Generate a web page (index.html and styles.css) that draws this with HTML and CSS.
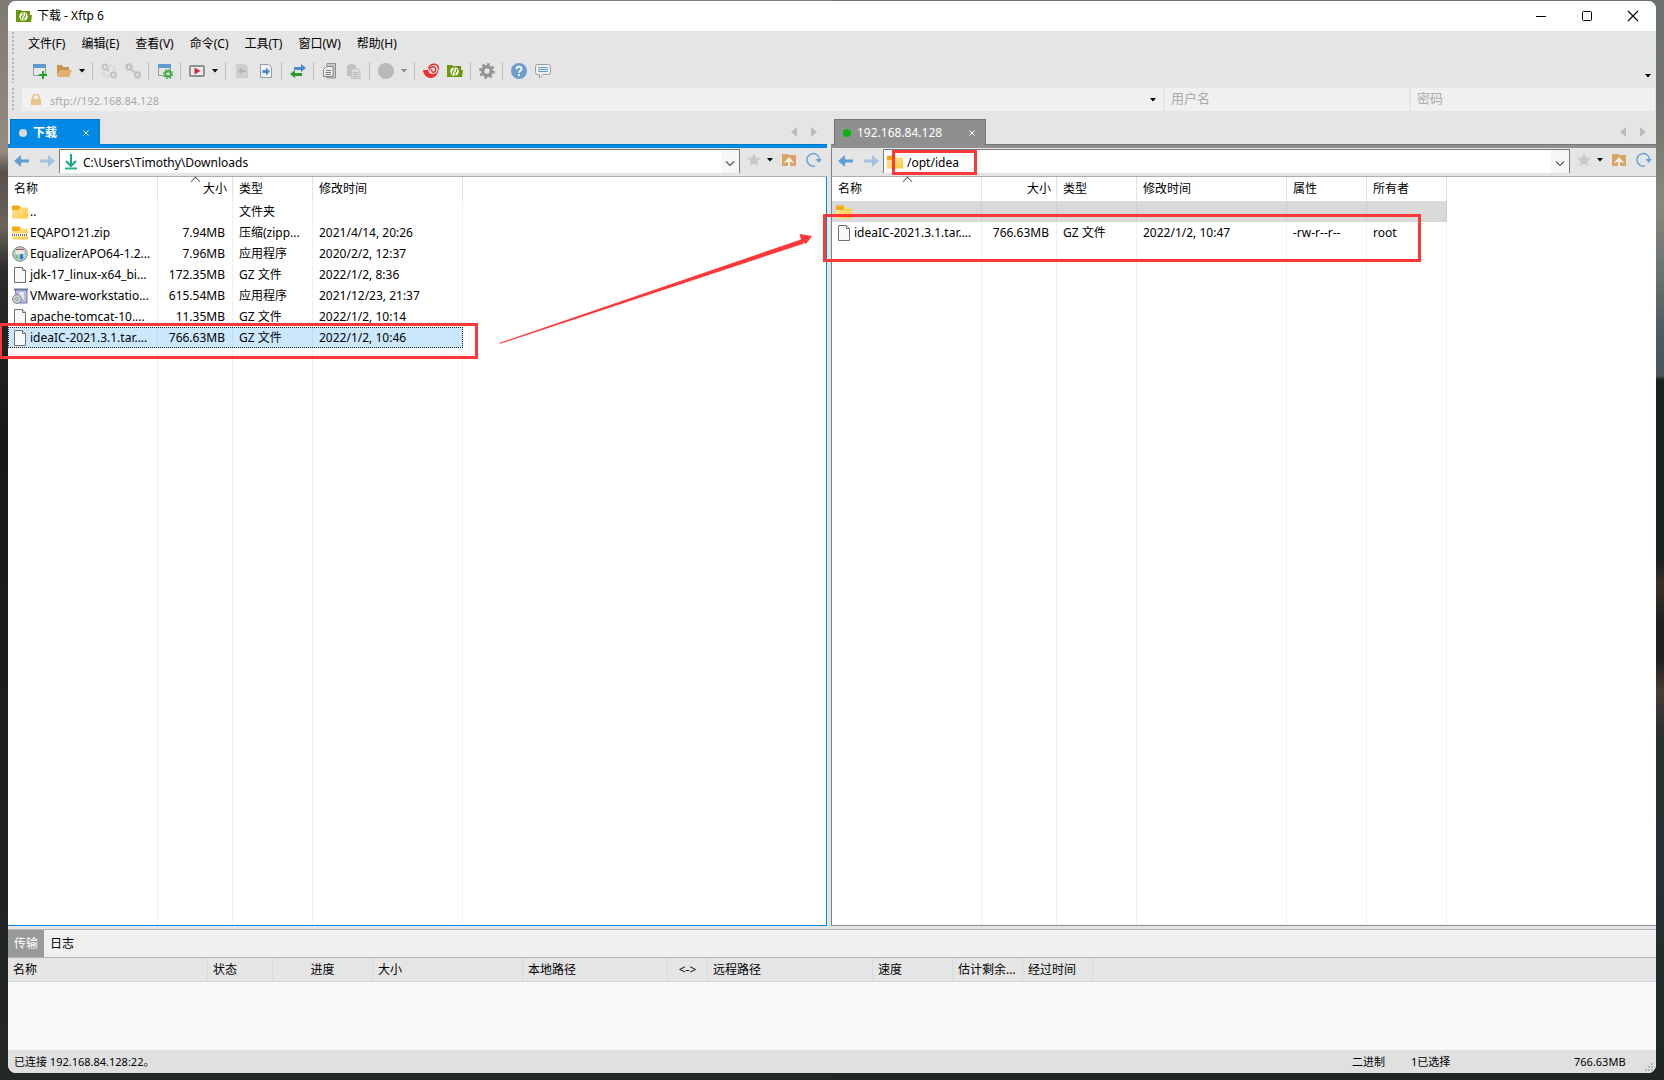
FILE: index.html
```html
<!DOCTYPE html>
<html lang="zh-CN">
<head>
<meta charset="utf-8">
<title>下载 - Xftp 6</title>
<link rel="stylesheet" href="styles.css">
</head>
<body>
<svg class="sprite" aria-hidden="true">
  <defs>
    <linearGradient id="fold" x1="0" y1="0" x2="1" y2="1"><stop offset="0" stop-color="#ffe69a"/><stop offset="1" stop-color="#ffc83c"/></linearGradient>
    <symbol id="i-xftp" viewBox="0 0 16 16"><path d="M0 2h5l1 1h8v4h2l-1 7H0z" fill="#6a9a0c"/><circle cx="7.500" cy="8.500" r="4.200" fill="#fff"/><path d="M7 3.500v4.500H5.500M8 13.500V9h1.500M5.500 8v3M9.500 9V6" fill="none" stroke="#6a9a0c"/></symbol>
    <symbol id="i-new" viewBox="0 0 16 16"><path d="M1.500 2.500h12v10h-12z" fill="#e9e9e9" stroke="#8f9aa3"/><path d="M1 1h13v4H1z" fill="#5c9bd1"/><path d="M11 8v8M7 12h8" stroke="#1ea51e" stroke-width="2"/></symbol>
    <symbol id="i-open" viewBox="0 0 16 16"><path d="M1 2h5l1 2h6v3H4l-3 6z" fill="#c99452"/><path d="M4 7h12l-3 7H1z" fill="#e0b06c"/></symbol>
    <symbol id="i-unlink" viewBox="0 0 16 16"><g fill="none" stroke="#c3c3c3" stroke-width="2"><circle cx="4" cy="4" r="2.500"/><circle cx="12.500" cy="12" r="2.500"/><path d="M6 6l2 2M9 10l2 1"/></g><path d="M10 1l-1 3M14 3l-3 2M15 7h-3M1 10h3M2 14l3-2M7 15v-3" stroke="#c8c8c8"/></symbol>
    <symbol id="i-link" viewBox="0 0 16 16"><g fill="none" stroke="#c3c3c3" stroke-width="2.400"><circle cx="4" cy="4" r="2.500"/><circle cx="12.500" cy="12" r="2.500"/><path d="M6 6l5 5"/></g></symbol>
    <symbol id="i-props" viewBox="0 0 16 16"><path d="M1.500 2.500h12v10h-12z" fill="#e4e4e4" stroke="#8f9aa3"/><path d="M1 1h13v4H1z" fill="#5c9bd1"/><circle cx="11" cy="11" r="2.800" fill="none" stroke="#3fae3f" stroke-width="2"/><circle cx="11" cy="11" r="4.400" fill="none" stroke="#3fae3f" stroke-width="1.400" stroke-dasharray="1.700 1.750"/></symbol>
    <symbol id="i-play" viewBox="0 0 16 16"><rect x="1" y="3" width="14" height="10" rx="1" fill="#ececec" stroke="#8c9296" stroke-width="2"/><path d="M5.500 4.500L11.500 8l-6 3.500z" fill="#e0283c"/></symbol>
    <symbol id="i-docl" viewBox="0 0 16 16"><path d="M2 1h9l3 3v11H2z" fill="#cfcfcf"/><path d="M4 8l4-3.500V7h4v2H8v2.500z" fill="#b4b4b4"/></symbol>
    <symbol id="i-docr" viewBox="0 0 16 16"><path d="M2.500 1.500h8l3 3v10h-11z" fill="#f3f3f3" stroke="#8f9aa3"/><path d="M12 8.500L8 4.500V7H4.500v3H8v2.500z" fill="#4a8ccc"/></symbol>
    <symbol id="i-swap" viewBox="0 0 16 16"><path d="M16 5l-5-4v3H4v3h7v2z" fill="#4a8ccc"/><path d="M0 11l5-4v3h7v3H5v2z" fill="#2b9c2b"/></symbol>
    <symbol id="i-copy" viewBox="0 0 16 16"><path d="M5 .5h8.500v14.500H5z" fill="#c9c9c9" stroke="#8e8e8e"/><path d="M4.500 3.500h6.500v10H1.500v-7z" fill="#f0f0f0" stroke="#858585"/><path d="M4 7.500h5M3.500 9.500h5.500M3.500 11.500h5.500" stroke="#777"/></symbol>
    <symbol id="i-paste" viewBox="0 0 16 16"><path d="M1 2h2V1h5v1h2v11H1z" fill="#c1c1c1"/><path d="M5.500 5.500h6l2.500 2v8H5.500z" fill="#d9d9d9" stroke="#c0c0c0"/><path d="M7 9.500h5M7 11.500h5M7 13.500h5" stroke="#bbb"/></symbol>
    <symbol id="i-dot" viewBox="0 0 16 16"><circle cx="8" cy="8" r="8" fill="#b9b9b9"/></symbol>
    <symbol id="i-swirl" viewBox="0 0 16 16"><path d="M0 7l5 0c.5 3.500 3.500 5 7 3.500 2-1 3.500-4 3.200-6.500C16.500 9 13 14.500 8 15 3.500 15 .5 11.500 0 7z" fill="#ee3030"/><path d="M5.500 5.500C6 2.500 9 .8 12 1.300c2.500.6 3.800 2.600 3.300 5.200" fill="none" stroke="#ee3030" stroke-width="1.500"/><path d="M6.500 7.500C6.300 4.500 9 3.300 11 4c2.200.8 2.300 4 .3 5-1.800.8-3.500-1-2.300-2.500" fill="none" stroke="#ee3030" stroke-width="1.400"/></symbol>
    <symbol id="i-gear" viewBox="0 0 16 16"><circle cx="8" cy="8" r="4.300" fill="none" stroke="#8f9193" stroke-width="3.200"/><circle cx="8" cy="8" r="6.800" fill="none" stroke="#8f9193" stroke-width="2.200" stroke-dasharray="2.650 2.690"/></symbol>
    <symbol id="i-help" viewBox="0 0 16 16"><circle cx="8" cy="8" r="8" fill="#6a9ed2"/><path d="M5.500 6.200C5.500 2.800 10.600 3 10.500 6 10.400 7.700 8 7.800 8 9.700M8 11v2" fill="none" stroke="#fff" stroke-width="1.800"/></symbol>
    <symbol id="i-chat" viewBox="0 0 16 16"><path d="M2.500 1.500h11a2 2 0 0 1 2 2v6a2 2 0 0 1-2 2H8L4.500 15v-3.500h-2a2 2 0 0 1-2-2v-6a2 2 0 0 1 2-2z" fill="#eee" stroke="#989c9f"/><path d="M3 4.500h10M3 6.500h10M3 8.500h10" stroke="#5f9ad2"/></symbol>
    <symbol id="i-caret" viewBox="0 0 6 4"><path d="M0 0h6L3 3.500z" fill="currentColor"/></symbol>
    <symbol id="i-lock" viewBox="0 0 12 12"><path d="M3 6V3.500a3 3 0 0 1 6 0V6" fill="none" stroke="#e8c48c" stroke-width="1.700"/><path d="M1 5h10v6H1z" fill="#ecc48a"/></symbol>
    <symbol id="i-back" viewBox="0 0 16 14"><path d="M0 7l7-6v4.500h8v3H7V13z" fill="#5f9fd8"/></symbol>
    <symbol id="i-fwd" viewBox="0 0 16 14"><path d="M16 7L9 1v4.500H1v3h8V13z" fill="#a3c3e0"/></symbol>
    <symbol id="i-down" viewBox="0 0 14 16"><path d="M7 0v11M2 7l5 5 5-5" fill="none" stroke="#17a884" stroke-width="2"/><path d="M1 14.500h12" stroke="#2bb08a" stroke-width="2"/></symbol>
    <symbol id="i-chev" viewBox="0 0 10 6"><path d="M1 .5l4 4 4-4" fill="none" stroke="#555" stroke-width="1.100"/></symbol>
    <symbol id="i-star" viewBox="0 0 14 14"><path d="M7 0l2 4.700 5 .4-3.800 3.300L11.400 13 7 10.500 2.600 13l1.200-4.600L0 5.100l5-.4z" fill="#c8c8c8"/></symbol>
    <symbol id="i-up" viewBox="0 0 14 14"><path d="M0 1h6l1 1h7v11H0z" fill="#d8a565"/><path d="M7 4l4.500 5-1 1L8 8.500V14H6V8.500L3.500 10l-1-1z" fill="#f3efe9"/></symbol>
    <symbol id="i-refresh" viewBox="0 0 16 16"><path d="M9 13.900A6.300 6.300 0 1 1 13.500 7" fill="none" stroke="#68a4d8" stroke-width="1.500"/><path d="M9.500 7H16l-3.200 4z" fill="#68a4d8"/></symbol>
    <symbol id="i-folder" viewBox="0 0 16 16"><path d="M0 2.500a1 1 0 0 1 1-1h6l2 2v4H0z" fill="#f3ac10"/><path d="M0 6h6.500L9 3.500h6a1 1 0 0 1 1 1v9a1 1 0 0 1-1 1H1a1 1 0 0 1-1-1z" fill="url(#fold)"/></symbol>
    <symbol id="i-zip" viewBox="0 0 16 16"><path d="M0 2.500a1 1 0 0 1 1-1h6l2 2v4H0z" fill="#f3ac10"/><path d="M0 6h6.500L9 3.500h6a1 1 0 0 1 1 1v9a1 1 0 0 1-1 1H1a1 1 0 0 1-1-1z" fill="url(#fold)"/><path d="M0 10h16" stroke="#f4f4f4" stroke-width="3"/><path d="M0 10h16" stroke="#777" stroke-width="2" stroke-dasharray="1 1"/></symbol>
    <symbol id="i-file" viewBox="0 0 16 16"><path d="M2.500.5h8l3 3v12h-11z" fill="#f9f9f9" stroke="#707070"/><path d="M10.500.5v3h3" fill="#ddd" stroke="#707070"/></symbol>
    <symbol id="i-disc" viewBox="0 0 16 16"><circle cx="8" cy="8" r="7.300" fill="#b9d3c8" stroke="#7d8a90"/><path d="M4 3h8v5H4z" fill="#e8e8e0"/><path d="M4 3.500h8" stroke="#b0453a"/><path d="M2 9l4 5V9z" fill="#7fc27c"/><path d="M8 8h3v3h1l-2.500 3L7 11h1z" fill="#2b7fc9"/></symbol>
    <symbol id="i-setup" viewBox="0 0 16 16"><path d="M2 1.500h14" stroke="#6a6f9a" stroke-width="2"/><path d="M3 2h12v13H6z" fill="#b9bce0" stroke="#7175a8"/><path d="M7 4h5v7H7z" fill="#e2e4f6"/><circle cx="5" cy="11" r="4.500" fill="#c9cdc9" stroke="#888"/><circle cx="5" cy="11" r="1.300" fill="#fff" stroke="#6a8"/></symbol>
  </defs>
</svg>

<div class="window">
  <header class="titlebar">
    <svg class="ic"><use href="#i-xftp"/></svg>
    <h1 class="title">下载 - Xftp 6</h1>
    <div class="winbtns">
      <button class="winbtn" aria-label="最小化"><svg class="wic" viewBox="0 0 12 12"><path d="M1 6.500h10" stroke="#000"/></svg></button>
      <button class="winbtn" aria-label="最大化"><svg class="wic" viewBox="0 0 12 12"><rect x="1.500" y="1.500" width="9" height="9" rx="1" fill="none" stroke="#000"/></svg></button>
      <button class="winbtn" aria-label="关闭"><svg class="wic" viewBox="0 0 12 12"><path d="M1 1l10 10M11 1L1 11" stroke="#000" stroke-width="1.100"/></svg></button>
    </div>
  </header>

  <nav class="bar menubar">
    <span class="grip"></span>
    <button class="menu">文件(F)</button><button class="menu">编辑(E)</button><button class="menu">查看(V)</button><button class="menu">命令(C)</button><button class="menu">工具(T)</button><button class="menu">窗口(W)</button><button class="menu">帮助(H)</button>
  </nav>

  <div class="bar toolbar">
    <span class="grip"></span>
    <button class="tool" aria-label="新建"><svg class="ic"><use href="#i-new"/></svg></button>
    <button class="tool" aria-label="打开"><svg class="ic"><use href="#i-open"/></svg></button>
    <button class="drop" aria-label="打开列表"><svg class="caret"><use href="#i-caret"/></svg></button>
    <span class="sep"></span>
    <button class="tool" aria-label="断开"><svg class="ic"><use href="#i-unlink"/></svg></button>
    <button class="tool" aria-label="重新连接"><svg class="ic"><use href="#i-link"/></svg></button>
    <span class="sep"></span>
    <button class="tool" aria-label="属性"><svg class="ic"><use href="#i-props"/></svg></button>
    <span class="sep"></span>
    <button class="tool" aria-label="运行"><svg class="ic"><use href="#i-play"/></svg></button>
    <button class="drop" aria-label="运行列表"><svg class="caret"><use href="#i-caret"/></svg></button>
    <span class="sep"></span>
    <button class="tool" aria-label="下载"><svg class="ic"><use href="#i-docl"/></svg></button>
    <button class="tool" aria-label="上传"><svg class="ic"><use href="#i-docr"/></svg></button>
    <span class="sep"></span>
    <button class="tool" aria-label="同步"><svg class="ic"><use href="#i-swap"/></svg></button>
    <span class="sep"></span>
    <button class="tool" aria-label="复制"><svg class="ic"><use href="#i-copy"/></svg></button>
    <button class="tool" aria-label="粘贴"><svg class="ic"><use href="#i-paste"/></svg></button>
    <span class="sep"></span>
    <button class="tool" aria-label="停止"><svg class="ic"><use href="#i-dot"/></svg></button>
    <button class="drop dim" aria-label="停止列表"><svg class="caret"><use href="#i-caret"/></svg></button>
    <span class="sep"></span>
    <button class="tool" aria-label="Xshell"><svg class="ic"><use href="#i-swirl"/></svg></button>
    <button class="tool" aria-label="Xftp"><svg class="ic"><use href="#i-xftp"/></svg></button>
    <span class="sep"></span>
    <button class="tool" aria-label="选项"><svg class="ic"><use href="#i-gear"/></svg></button>
    <span class="sep"></span>
    <button class="tool" aria-label="帮助"><svg class="ic"><use href="#i-help"/></svg></button>
    <button class="tool" aria-label="反馈"><svg class="ic"><use href="#i-chat"/></svg></button>
    <button class="drop more" aria-label="更多"><svg class="caret"><use href="#i-caret"/></svg></button>
  </div>

  <div class="bar address">
    <span class="grip"></span>
    <div class="field host">
      <svg class="lock"><use href="#i-lock"/></svg>
      <input class="hostinput" aria-label="地址" value="sftp://192.168.84.128">
      <button class="drop" aria-label="历史地址"><svg class="caret"><use href="#i-caret"/></svg></button>
    </div>
    <input class="field cred" aria-label="用户名" placeholder="用户名">
    <input class="field cred" type="password" aria-label="密码" placeholder="密码">
  </div>

  <main class="panes">
    <section class="pane local">
      <div class="tabs">
        <button class="tab"><span class="dot"></span><b class="tabname">下载</b><svg class="tabx" viewBox="0 0 6 6"><path d="M.5.500l5 5M5.500.500l-5 5" stroke="#fff"/></svg></button>
        <div class="scrolls"><svg class="tri" viewBox="0 0 6 10"><path d="M6 0v10L0 5z"/></svg><svg class="tri" viewBox="0 0 6 10"><path d="M0 0v10l6-5z"/></svg></div>
      </div>
      <div class="nav">
        <button class="go" aria-label="后退"><svg class="arrow"><use href="#i-back"/></svg></button>
        <button class="go" aria-label="前进"><svg class="arrow"><use href="#i-fwd"/></svg></button>
        <div class="combo">
          <svg class="ic"><use href="#i-down"/></svg>
          <input class="path" aria-label="本地路径" value="C:\Users\Timothy\Downloads">
          <button class="open" aria-label="展开"><svg class="chev"><use href="#i-chev"/></svg></button>
        </div>
        <button class="tool star" aria-label="书签"><svg class="sm"><use href="#i-star"/></svg></button>
        <button class="drop" aria-label="书签列表"><svg class="caret"><use href="#i-caret"/></svg></button>
        <button class="tool up" aria-label="上级"><svg class="sm"><use href="#i-up"/></svg></button>
        <button class="tool re" aria-label="刷新"><svg class="ic"><use href="#i-refresh"/></svg></button>
      </div>
      <div class="list">
        <table class="files">
          <colgroup><col class="w150"><col class="w75"><col class="w80"><col class="w150"></colgroup>
          <thead><tr><th>名称</th><th class="num sorted">大小</th><th>类型</th><th>修改时间</th></tr></thead>
          <tbody>
            <tr><td><span class="name"><svg class="ic"><use href="#i-folder"/></svg>..</span></td><td></td><td>文件夹</td><td></td></tr>
            <tr><td><span class="name"><svg class="ic"><use href="#i-zip"/></svg>EQAPO121.zip</span></td><td class="num">7.94MB</td><td>压缩(zipp...</td><td>2021/4/14, 20:26</td></tr>
            <tr><td><span class="name"><svg class="ic"><use href="#i-disc"/></svg>EqualizerAPO64-1.2...</span></td><td class="num">7.96MB</td><td>应用程序</td><td>2020/2/2, 12:37</td></tr>
            <tr><td><span class="name"><svg class="ic"><use href="#i-file"/></svg>jdk-17_linux-x64_bi...</span></td><td class="num">172.35MB</td><td>GZ 文件</td><td>2022/1/2, 8:36</td></tr>
            <tr><td><span class="name"><svg class="ic"><use href="#i-setup"/></svg>VMware-workstatio...</span></td><td class="num">615.54MB</td><td>应用程序</td><td>2021/12/23, 21:37</td></tr>
            <tr><td><span class="name"><svg class="ic"><use href="#i-file"/></svg>apache-tomcat-10....</span></td><td class="num">11.35MB</td><td>GZ 文件</td><td>2022/1/2, 10:14</td></tr>
            <tr class="selected"><td><span class="name"><svg class="ic"><use href="#i-file"/></svg>ideaIC-2021.3.1.tar....</span></td><td class="num">766.63MB</td><td>GZ 文件</td><td>2022/1/2, 10:46</td></tr>
            <tr class="rest"><td></td><td></td><td></td><td></td></tr>
          </tbody>
        </table>
        <span class="mark markfile"></span>
        <svg class="pointer" viewBox="0 0 315 112"><path d="M0 110L302 6.500 300.500 1 313 3 307 11 305 9.500 303.500 11 1 110.800z" fill="#fc3838"/></svg>
      </div>
    </section>

    <div class="splitter"></div>

    <section class="pane remote">
      <div class="tabs">
        <button class="tab"><span class="dot"></span><span class="tabname">192.168.84.128</span><svg class="tabx" viewBox="0 0 6 6"><path d="M.5.500l5 5M5.500.500l-5 5" stroke="#fff"/></svg></button>
        <div class="scrolls"><svg class="tri" viewBox="0 0 6 10"><path d="M6 0v10L0 5z"/></svg><svg class="tri" viewBox="0 0 6 10"><path d="M0 0v10l6-5z"/></svg></div>
      </div>
      <div class="nav">
        <button class="go" aria-label="后退"><svg class="arrow"><use href="#i-back"/></svg></button>
        <button class="go" aria-label="前进"><svg class="arrow"><use href="#i-fwd"/></svg></button>
        <div class="combo">
          <svg class="ic"><use href="#i-folder"/></svg>
          <input class="path" aria-label="远程路径" value="/opt/idea">
          <button class="open" aria-label="展开"><svg class="chev"><use href="#i-chev"/></svg></button>
          <span class="mark markpath"></span>
        </div>
        <button class="tool star" aria-label="书签"><svg class="sm"><use href="#i-star"/></svg></button>
        <button class="drop" aria-label="书签列表"><svg class="caret"><use href="#i-caret"/></svg></button>
        <button class="tool up" aria-label="上级"><svg class="sm"><use href="#i-up"/></svg></button>
        <button class="tool re" aria-label="刷新"><svg class="ic"><use href="#i-refresh"/></svg></button>
      </div>
      <div class="list">
        <table class="files">
          <colgroup><col class="w150"><col class="w75"><col class="w80"><col class="w150"><col class="w80"><col class="w80"></colgroup>
          <thead><tr><th class="sorted">名称</th><th class="num">大小</th><th>类型</th><th>修改时间</th><th>属性</th><th>所有者</th></tr></thead>
          <tbody>
            <tr class="inactive"><td><span class="name"><svg class="ic"><use href="#i-folder"/></svg></span></td><td></td><td></td><td></td><td></td><td></td></tr>
            <tr><td><span class="name"><svg class="ic"><use href="#i-file"/></svg>ideaIC-2021.3.1.tar....</span></td><td class="num">766.63MB</td><td>GZ 文件</td><td>2022/1/2, 10:47</td><td>-rw-r--r--</td><td>root</td></tr>
            <tr class="rest"><td></td><td></td><td></td><td></td><td></td><td></td></tr>
          </tbody>
        </table>
        <span class="mark markdone"></span>
      </div>
    </section>
  </main>

  <section class="transfers">
    <div class="logtabs"><button class="logtab current">传输</button><button class="logtab">日志</button></div>
    <div class="queue">
      <table class="jobs">
        <colgroup><col class="w200"><col class="w65"><col class="w100"><col class="w150"><col class="w145"><col class="w40"><col class="w165"><col class="w80"><col class="w70"><col class="w70"><col></colgroup>
        <thead><tr><th>名称</th><th>状态</th><th class="mid">进度</th><th>大小</th><th>本地路径</th><th class="mid">&lt;-&gt;</th><th>远程路径</th><th>速度</th><th>估计剩余...</th><th>经过时间</th><th></th></tr></thead>
      </table>
    </div>
  </section>

  <footer class="status">
    <span class="conn">已连接 192.168.84.128:22。</span>
    <span class="mode">二进制</span>
    <span class="count">1已选择</span>
    <span class="total">766.63MB</span>
    <svg class="resize" viewBox="0 0 10 10"><path d="M7 1h2M4 4h2M7 4h2M1 7h2M4 7h2M7 7h2" stroke="#b8b8b8" stroke-width="2"/></svg>
  </footer>
</div>
</body>
</html>
```

FILE: styles.css
```css
* { box-sizing: border-box; }

body {
  margin: 0;
  height: 100vh;
  padding: 1px 8px 7px;
  overflow: hidden;
  font: 12px/16px "Noto Sans", "Noto Sans CJK SC", sans-serif;
  color: #000;
  background:
    linear-gradient(#7d7a74 0, #8b847b 8%, #948a80 14%, #56514b 16%, #6a645b 21%, #2c2c29 25%, #151918 40%, #232726 100%) left / 50% 100% no-repeat,
    linear-gradient(#6b716d 0, #70756f 10%, #89887e 19%, #66706e 26%, #4a5a5d 31%, #48565a 34.800%, #1b2120 35.200%, #1a201f 52%, #3a302a 54%, #1d1f1e 58%, #20201f 61%, #463b35 64%, #2a2f30 68%, #263033 80%, #1f2524 100%) right / 50% 100% no-repeat;
}

button, input {
  font: inherit;
  color: inherit;
  padding: 0;
  border: 0;
  margin: 0;
  background: none;
}

input { min-width: 0; outline: 0; }
svg { display: block; flex: none; }

.sprite { position: absolute; width: 0; height: 0; }

.window {
  height: 100%;
  display: flex;
  flex-direction: column;
  background: #e5e5e5;
  border-radius: 8px;
  overflow: clip;
  overflow-clip-margin: 8px;
}

.ic { width: 16px; height: 16px; }
.sm { width: 14px; height: 14px; }
.caret { width: 6px; height: 4px; }

/* title bar */
.titlebar {
  display: flex;
  align-items: center;
  gap: 5px;
  height: 30px;
  padding-left: 8px;
  background: #fff;
  border-radius: 8px 8px 0 0;
}
.title { margin: 0; font-size: 12px; font-weight: 400; flex: 1; }
.winbtns { display: flex; }
.winbtn { width: 46px; height: 28px; display: grid; place-items: center; }
.wic { width: 12px; height: 12px; }

/* menu, tools, address */
.bar { display: flex; align-items: center; padding-left: 4px; }
.grip {
  width: 2px;
  align-self: stretch;
  margin: 1px 0;
  background: repeating-linear-gradient(#b4b4b4 0 2px, transparent 2px 4px);
}
.menubar { height: 26px; gap: 16px; }
.menubar .grip { margin-right: -2px; }

.toolbar { height: 27px; gap: 8px; margin-bottom: 4px; }
.toolbar .grip { margin-right: 10px; }
.tool { width: 16px; height: 16px; display: grid; place-items: center; }
.drop { width: 7px; height: 16px; display: grid; place-items: center; }
.toolbar .drop { margin-left: -2px; }
.dim { color: #888; }
.toolbar .more { margin: 10px 5px 0 auto; }
.sep { width: 1px; height: 18px; margin-left: -1px; background: #bdbdbd; }

.address { height: 23px; gap: 2px; margin-bottom: 8px; padding-right: 1px; }
.address .grip { margin: 0 6px 0 0; }
.field { height: 23px; background: #f0f0f0; }
.host { flex: 1; display: flex; align-items: center; padding: 0 7px 0 8px; gap: 8px; }
.lock { width: 12px; height: 12px; }
.hostinput { flex: 1; height: 20px; margin-top: 2px; font-size: 11px; color: #a9a9a9; }
.cred { flex: 0 1 244px; padding: 0 6px 3px; font-size: 13px; }
.cred::placeholder { color: #ababab; }

/* panes */
.panes {
  flex: 1;
  min-height: 0;
  display: grid;
  grid-template-columns: minmax(0, 819fr) 4px minmax(0, 825fr);
}
.pane { display: flex; flex-direction: column; min-width: 0; min-height: 0; }
.local { --accent: #008ae5; --edge: #0078cc; --dot: #d9d9d9; }
.remote { --accent: #8f8f8f; --edge: #757575; --dot: #0cb30c; }

.tabs {
  display: flex;
  justify-content: space-between;
  align-items: flex-start;
  height: 29px;
  padding: 0 10px 0 2px;
  background: linear-gradient(var(--edge) 1px, var(--accent) 1px) bottom / 100% 4px no-repeat;
}
.tab {
  display: flex;
  align-items: center;
  height: 26px;
  width: 90px;
  padding: 0 10px 0 8px;
  color: #fff;
  background: var(--accent);
  border: 1px solid var(--edge);
  border-bottom: 0;
}
.remote .tab { width: 152px; }
.remote .tabs { padding-left: 3px; }
.dot { width: 8px; height: 8px; border-radius: 50%; background: var(--dot); }
.tabname { flex: 1; padding-left: 6px; text-align: left; }
.tabx { width: 6px; height: 6px; }
.scrolls { display: flex; gap: 14px; padding-top: 8px; }
.tri { width: 6px; height: 10px; fill: #bcbcbc; }

.nav {
  display: flex;
  height: 29px;
  padding: 1px 4px 0 6px;
  border-bottom: 1px solid #adadad;
}
.local .nav { padding-right: 5px; }
.remote .nav, .remote .list { border-left: 1px solid #808080; }
.go { width: 16px; height: 23px; margin-right: 9px; display: grid; place-items: center; }
.go + .combo { margin-left: -5px; }
.arrow { width: 16px; height: 14px; }
.combo {
  position: relative;
  flex: 1;
  height: 24px;
  display: flex;
  align-items: center;
  gap: 4px;
  padding-left: 3px;
  background: #fff;
  border: 1px solid #7a7a7a;
  border-bottom: 0;
}
.path { flex: 1; height: 23px; padding-top: 2px; }
.open { width: 18px; height: 23px; padding-top: 4px; background: #f7f7f7; display: grid; place-items: center; }
.chev { width: 10px; height: 6px; }
.nav .tool, .nav .drop { height: 22px; }
.star { margin-left: 6px; }
.nav .drop { margin-left: 4px; }
.up { margin-left: 8px; }
.re { margin-left: 9px; }

.list { position: relative; flex: 1; min-height: 0; background: #fff; border-bottom: 1px solid var(--accent); }
.local .list { border-right: 1px solid var(--accent); }
.files { height: 100%; table-layout: fixed; width: 455px; border-spacing: 0; }
.remote .files { width: 615px; }
.w40 { width: 40px; } .w65 { width: 65px; } .w70 { width: 70px; } .w75 { width: 75px; } .w80 { width: 80px; }
.w100 { width: 100px; } .w145 { width: 145px; } .w150 { width: 150px; } .w165 { width: 165px; } .w200 { width: 200px; }

th { position: relative; font-weight: 400; text-align: left; white-space: nowrap; }
.files th { height: 24px; padding: 0 5px 0 6px; border-right: 1px solid #e2e2e2; }
.files td {
  height: 21px;
  padding: 0 7px 0 6px;
  white-space: nowrap;
  border-right: 1px solid #e9f1fa;
}
.files td:first-child { padding: 0 0 0 4px; }
.files .num { text-align: right; }
.files .rest td { height: auto; }
.name { display: flex; align-items: center; gap: 2px; }
.sorted::before {
  content: "";
  position: absolute;
  top: 1px;
  left: 50%;
  width: 6px;
  height: 6px;
  margin-left: -3px;
  border: solid #666;
  border-width: 1px 0 0 1px;
  rotate: 45deg;
}
.selected td { background: #cce8ff; border-color: #bfdcf3; }
.selected { outline: 1px dotted #222; outline-offset: -1px; }
.inactive td { background: #d9d9d9; border-color: #c8d0d8; }

/* annotations drawn over the file lists */
.mark { position: absolute; border: 3px solid #fc3838; z-index: 2; }
.markfile { left: -9px; top: 146px; width: 479px; height: 36px; }
.markdone { left: -9px; top: 37px; width: 598px; height: 48px; }
.markpath { left: 8px; top: 0; width: 85px; height: 25px; }
.pointer { position: absolute; left: 491px; top: 56px; width: 315px; height: 112px; }

/* transfer queue */
.transfers { margin-top: 3px; border-top: 1px solid #b4b4b4; }
.logtabs { display: flex; height: 28px; background: #f0f0f0; border-bottom: 1px solid #b4b4b4; }
.logtab { width: 36px; height: 27px; }
.logtab.current { color: #fff; background: #999; }
.queue { height: 92px; background: #f8f8f8; }
.jobs { width: 100%; table-layout: fixed; border-spacing: 0; background: #e5e5e5; }
.jobs th { height: 24px; padding: 0 5px; border-right: 1px solid #d3dae4; border-bottom: 1px solid #d3dae4; }
.jobs th:last-child { border-right: 0; }
.jobs .mid { text-align: center; }

.status {
  display: flex;
  align-items: center;
  height: 23px;
  padding: 0 2px 0 6px;
  font-size: 11px;
  background: #e0e0e0;
  border-radius: 0 0 8px 8px;
}
.conn { flex: 1; }
.mode { width: 59px; }
.count { width: 163px; }
.total { width: 70px; }
.resize { width: 10px; height: 10px; align-self: flex-end; }
```
